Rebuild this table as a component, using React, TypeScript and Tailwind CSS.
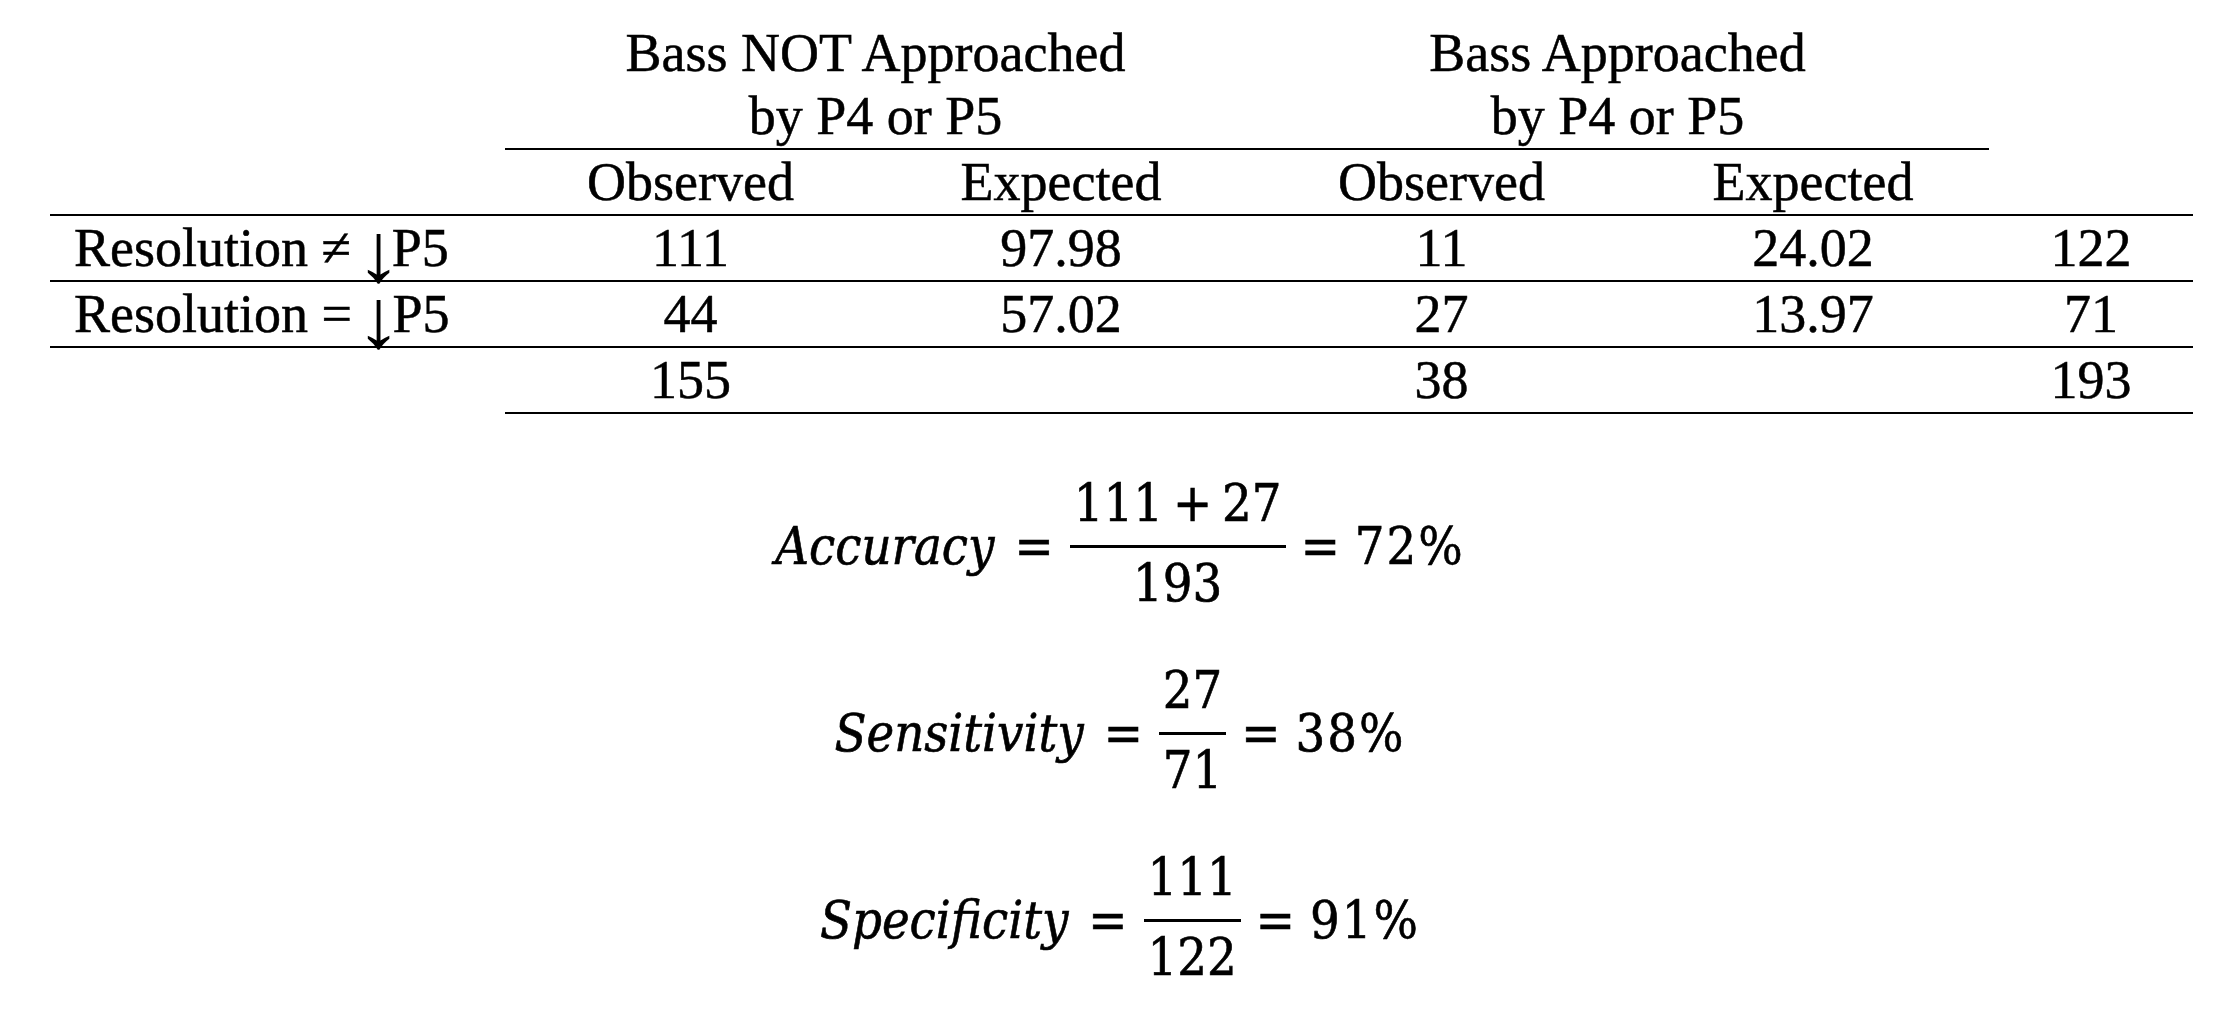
import React from 'react';

const serif = "font-['Liberation_Serif','Times_New_Roman',serif]";
const math = "font-['DejaVu_Serif_Condensed','DejaVu_Serif',serif]";

const rows = [
  { rel: '≠', obs1: '111', exp1: '97.98', obs2: '11', exp2: '24.02', total: '122' },
  { rel: '=', obs1: '44', exp1: '57.02', obs2: '27', exp2: '13.97', total: '71' },
];

function Cell({ children, line = true, left = false }: { children?: React.ReactNode; line?: boolean; left?: boolean }) {
  return (
    <div
      className={`h-[66px] leading-[64px] whitespace-nowrap ${line ? 'border-b-2 border-black' : ''} ${
        left ? 'text-left pl-[24px]' : 'text-center'
      }`}
    >
      {children}
    </div>
  );
}

function Frac({ num, den }: { num: React.ReactNode; den: React.ReactNode }) {
  return (
    <span className="inline-flex flex-col items-stretch">
      <span className="px-[4px] mb-[16px] text-center leading-none whitespace-nowrap">{num}</span>
      <span className="h-[3px] bg-black" />
      <span className="px-[4px] mt-[9px] pb-[5px] text-center leading-none whitespace-nowrap">{den}</span>
    </span>
  );
}

function Equation({ name, num, den, result }: { name: string; num: React.ReactNode; den: React.ReactNode; result: string }) {
  return (
    <div className="flex items-center justify-center text-[52px] leading-none">
      <span className="italic">{name}</span>
      <span className="ml-[20px] mr-[16px]">=</span>
      <Frac num={num} den={den} />
      <span className="ml-[15px] mr-[15px]">=</span>
      <span className="tracking-[2px]">{result}</span>
    </div>
  );
}

export default function App() {
  return (
    <div className="min-h-screen w-full bg-white text-black">
      {/* Contingency table */}
      <div className={`${serif} text-[54px] pt-[22px] ml-[50px] w-[2143px] [-webkit-text-stroke:0.5px_black]`}>
        <div className="grid grid-cols-[455px_371px_370px_391px_352px_204px]">
          <div />
          <div className="col-span-2 border-b-2 border-black text-center leading-[63px]">
            Bass NOT Approached
            <br />
            by P4 or P5
          </div>
          <div className="col-span-2 border-b-2 border-black text-center leading-[63px]">
            Bass Approached
            <br />
            by P4 or P5
          </div>
          <div />

          <Cell />
          <Cell>Observed</Cell>
          <Cell>Expected</Cell>
          <Cell>Observed</Cell>
          <Cell>Expected</Cell>
          <Cell />

          {rows.map((r) => (
            <React.Fragment key={r.rel}>
              <Cell left>
                Resolution {r.rel}{' '}
                <span className="inline-block translate-y-[5px] scale-x-[1.7] scale-y-[1.56] [-webkit-text-stroke:0px]">↓</span>P5
              </Cell>
              <Cell>{r.obs1}</Cell>
              <Cell>{r.exp1}</Cell>
              <Cell>{r.obs2}</Cell>
              <Cell>{r.exp2}</Cell>
              <Cell>{r.total}</Cell>
            </React.Fragment>
          ))}

          <Cell line={false} />
          <Cell>155</Cell>
          <Cell />
          <Cell>38</Cell>
          <Cell />
          <Cell>193</Cell>
        </div>
      </div>

      {/* Metrics */}
      <div className={`${math} mt-[63px] pl-[4px] flex flex-col gap-[50px] [-webkit-text-stroke:0.6px_black]`}>
        <Equation
          name="Accuracy"
          num={
            <>
              111<span className="mx-[10px]">+</span>27
            </>
          }
          den="193"
          result="72%"
        />
        <Equation name="Sensitivity" num="27" den="71" result="38%" />
        <Equation name="Specificity" num="111" den="122" result="91%" />
      </div>
    </div>
  );
}
